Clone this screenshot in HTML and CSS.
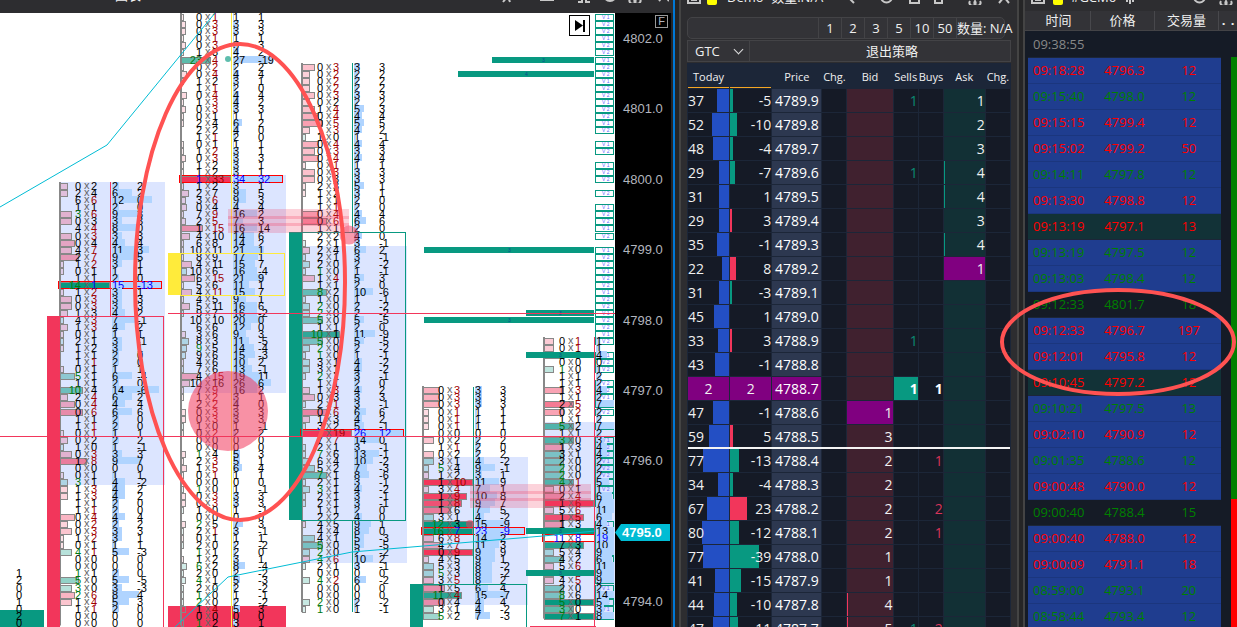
FILE: index.html
```
<!doctype html>
<html lang="zh-CN">
<head>
<meta charset="utf-8">
<title>图表</title>
<link rel="stylesheet" href="styles.css">
</head>

<body>
<div class="wrap">
	<div class="chart">
		<div class="bar chart-bar">
			<span class="name">图表</span>
			<svg class="icons" width="170" height="14" viewBox="0 0 170 14"><path d="M4 13l4-5M9 8l2 5M8 7V3M42 2h12v9H42zM79 13h4v-3M91 13h-4v-3M79 4V1h12v3M105 6a6 6 0 1 0 12 0a6 6 0 1 0-12 0M109 6h4M131 10a3 3 0 1 0 5 0a3 3 0 1 0 5 0M160 12l5-6l5 6"/></svg>
		</div>
		<div class="chart-main">
			<svg class="plot" id="plot"></svg>
			<button class="skip" aria-label="最新"><svg width="21" height="21" viewBox="0 0 21 21"><path d="M6 5l8 5.500l-8 5.500z"/><path d="M14 5h2v12h-2z"/></svg></button>
			<div class="axis">
				<button class="fix">F</button>
				<div class="prices" id="prices"></div>
				<div class="last">4795.0</div>
			</div>
		</div>
	</div>

	<div class="dom">
		<div class="bar dom-bar">
			<svg class="icons" width="14" height="14" viewBox="0 0 14 14"><path d="M1 5h12v7H1zM4 9h6"/></svg>
			<i class="flag"></i>
			<span class="name">Demo -数量:N/A</span>
			<svg class="icons push" width="170" height="14" viewBox="0 0 170 14"><path d="M2 4a4 4 0 1 0 8 0a4 4 0 1 0-8 0M9 8l4 4M40 6a5.500 5.500 0 1 0 11 0a5.500 5.500 0 1 0-11 0M69 2h9v10h-9zM94 2h7v10h-7zM96 8h4M129 10a3 3 0 1 0 5 0a3 3 0 1 0 5 0M158 12l5-6l5 6"/></svg>
		</div>
		<div class="qty">
			<input type="text" aria-label="数量">
			<button>1</button><button>2</button><button>3</button><button>5</button><button>10</button><button>50</button>
			<span>数量: N/A</span>
		</div>
		<div class="order">
			<select aria-label="有效期"><option>GTC</option></select>
			<button>退出策略</button>
		</div>
		<table class="ladder">
			<colgroup><col class="c42"><col class="c42"><col class="c50"><col class="c25"><col class="c46"><col class="c25"><col class="c25"><col class="c42"><col class="c25"></colgroup>
			<thead>
				<tr><th class="today">Today</th><th class="today"></th><th>Price</th><th>Chg.</th><th>Bid</th><th>Sells</th><th>Buys</th><th>Ask</th><th>Chg.</th></tr>
			</thead>
			<tbody id="ladder"></tbody>
		</table>
	</div>

	<div class="tape">
		<div class="bar tape-bar">
			<svg class="icons" width="14" height="14" viewBox="0 0 14 14"><path d="M1 5h12v7H1zM4 9h6"/></svg>
			<i class="flag"></i>
			<span class="name">#GCM6</span>
			<svg class="icons" width="12" height="14" viewBox="0 0 12 14"><path d="M1 8h10M3 4v7M6 3v10M9 4v7"/></svg>
			<svg class="icons push" width="40" height="14" viewBox="0 0 40 14"><path d="M1 6a5.500 5.500 0 1 0 11 0a5.500 5.500 0 1 0-11 0M28 10a3 3 0 1 0 5 0a3 3 0 1 0 5 0"/></svg>
		</div>
		<div class="tape-head"><span>时间</span><span>价格</span><span>交易量</span><b>.</b><b>.</b></div>
		<div class="tape-body">
			<table class="trades">
				<tbody id="trades"></tbody>
			</table>
			<div class="side"><i class="up"></i><i class="down"></i></div>
		</div>
		<svg class="ring" viewBox="0 0 238 110"><ellipse cx="119" cy="55" rx="116" ry="52"/></svg>
	</div>
</div>

<script>
var NS = 'http://www.w3.org/2000/svg';
var plot = document.getElementById('plot');
var RED = '#f2365b', GREEN = '#089981', YELLOW = '#ffeb3b', BLUE = '#b0d4ff', AREA = '#dce5ff';
var BAR = 13;//标题栏高度

function el(tag, attrs, text){
	var e = document.createElementNS(NS, tag);
	for (var k in attrs) e.setAttribute(k, attrs[k]);
	if (text !== undefined) e.textContent = text;
	plot.appendChild(e);
	return e;
}
function rect(x, y, w, h, fill, stroke, op){
	return el('rect', {x:x, y:y-BAR, width:w, height:h, fill:fill, stroke:stroke || 'none', 'fill-opacity':op === undefined ? 1 : op});
}
function line(x1, y1, x2, y2, color){
	return el('path', {d:'M'+x1+' '+(y1-BAR)+'L'+x2+' '+(y2-BAR), stroke:color, 'class':'ln'});
}
function text(x, y, s, cls){
	return el('text', {x:x, y:y-BAR, 'class':cls}, s);
}
//第k行的中心，0 = 4802.0
function rowY(k){
	return Math.round(38.4 + k*7.04);
}

//每一行: 卖x买，g = 绿色，r = 红色
var cols = [
	{x:60, k:21, max:13, vmax:15, poc:35, area:[182,485], rows:'0x2 2x4 6x6r 1x1 3gx6r 0x3 4x4r 0x3r 0x4 4x7r 2x7r 1x2r 0x1 1x1 14gx1 1x2r 0x3r 0x3r 1x3 4x3r 1x3r 0x1 2x1 1x2 1x1 1x1r 0x1 5gx1 1x1 10gx4 2x4r 0x4r 0x6r 1x1 1x1r 0x1r 0x2 1x0 0x3r 1x8r 0x0 0x1 3gx1 1x3r 1x3r 1x1 1x1r 0x4r 0x2r 0x3r 1x2r 0x1 4gx1r 0x0 0x0 1gx1 5gx0 3gx0 2gx6r 1x4r 1x1r 0x0 0x0'},
	{x:181, k:-3, max:32, vmax:34, poc:20, area:[175,393], rows:'0x1r 0x3r 0x3r 0x1r 0x3r 1x3 23gx4r 0x2r 0x4r 1x2 1x1r 0x4r 1x3r 0x3r 0x1 2x4 2x2 1x1r 0x1 1x2r 0x3r 1x2 1x2 1x33r 1x2 2x7 3x6r 0x4 7x9r 2x5r 1x15r 4x10 6x8 10x11 8x9 4x11 10x6 6x15r 5x6 4x11r 4x5 5x11 9x7 10x10 6x6 3x6 8x3 9gx5 9x6 4x6 7x6 4x15r 10x16 7x9r 1x2r 2x2r 0x3r 0x3r 1x0 0x2r 0x0 0x0 1gx4 2x3r 1x5r 0x1r 0x0 1gx0 0x3r 0x3r 1x0 0x0 2gx5 2x1r 0x1 2x0 1gx1 1x2 6gx2 2x0 4gx1 2x0 1gx0 2gx0 1x4r 0x0 1gx2'},
	{x:302, k:4, max:12, vmax:26, poc:56, area:[246,563], rows:'0x3r 0x2r 0x2r 0x2r 0x3r 0x2 1x4r 0x4r 0x5r 1x3r 1x0 0x4r 0x3r 0x4r 0x1r 0x3r 0x3 2x3 1x2 1x1 1x1r 0x4r 0x6r 1x1 2x2 2x1 2x4 2x1 2x0 1gx0 1x4r 1x1 8gx2 1x0 2gx0 2gx0 5gx0 1x1 10gx1 5gx0 2gx0 1gx0 3x1 3x1 2gx1 1x1 1x3r 0x3 2x1r 0x6r 1x3 3x2 7x19r 7x7r 2x1 7gx6 6x4 5x2 7gx1 2x1 3gx1 2x1 2x1 1x1 2x2 4x5 4x4 4x1 5gx0 2gx0 4gx6r 2x1 0x0 4gx2r 0x0 0x0 2gx0 1gx0'},
	{x:423, k:50, max:9, vmax:23, poc:70, area:[457,605], rows:'0x3r 0x3r 0x3r 0x1r 0x1r 0x1r 0x0 0x2 1x1r 0x2 3x1 5gx4 1x2 1x10r 3x4r 1x9r 1x8r 1x6 3x1 12gx3 16gx7 6x8r 4x7r 0x9r 4x5 5x3 5gx3 3x5r 1x5 11gx4r 0x4 3x1 5gx2'},
	{x:544, k:43, max:5, vmax:19, poc:71, area:[422,605], rows:'0x1r 0x1r 1x3 0x0 1gx0 1x1 1x1 1x3r 1x1 2x5r 0x2r 1x1 5gx2 1x1 3gx0 1x3 3x1 2x0 2gx0 2gx0 4gx1r 0x1 2x4r 1x6r 5x6r 1x5r 1x3 8x5 11x8 7x3 5x4 4x2 5x6r 5x4 4x5r 2x0 8gx6 5gx0 3gx0 7gx1'}
];

//背景
cols.forEach(function(c){
	rect(c.x, c.area[0], c.x == 544 ? 71 : 105, c.area[1]-c.area[0], AREA);
});
rect(47, 316, 12, 320, RED);
rect(0, 610, 44, 30, GREEN);
rect(168, 606, 118, 30, RED);
rect(168, 253, 12, 42, YELLOW);
rect(289, 232, 12, 288, GREEN);
rect(410, 584, 12, 50, GREEN);
rect(530, 626, 66, 5, RED);

//右侧成交量小框
var boxes = [];
for (var k=-3;k<83;k++){
	if ([14,17,21,23,29,44,48,54,56,67,68].indexOf(k) < 0) boxes.push(k);
}
boxes.forEach(function(k){
	rect(595.5, rowY(k)-2.5, 18, 6, k > 55 ? AREA : '#fff', GREEN);
	text(602, rowY(k)+2, 'V ' + (1 + (k*k+3)%3), 'tiny');
});

cols.forEach(function(c){
	c.rows.split(' ').forEach(function(s, i){
		var m = s.match(/^(\d+)(g?)x(\d+)(r?)$/);
		var bid = +m[1], ask = +m[3], d = ask-bid, vol = ask+bid;
		var y = rowY(c.k+i), poc = c.k+i == c.poc;
		var w = Math.min(50, Math.round(50*Math.abs(d)/c.max));
		var a = Math.min(1, Math.abs(d)/c.max + 0.06);
		if (d) rect(c.x+.5, y-2.5, Math.max(2, w-1), 6, d > 0 ? RED : GREEN, '#888', a);
		rect(c.x+52, y-4, Math.min(c.x == 544 ? 18 : 50, Math.round(50*vol/c.vmax)), 7, BLUE);
		if (poc) rect(c.x-1.5, y-3.5, c.x == 544 ? 52 : 103, 7, c.x == 544 ? '#fff' : 'none', '#f00');
		text(c.x+21, y+4, bid, 'n end ' + (m[2] ? 'g' : poc ? 'b' : ''));
		text(c.x+24, y+3, 'x', 'n x');
		text(c.x+31, y+4, ask, 'n ' + (m[4] ? 'r' : poc ? 'b' : ''));
		text(c.x+52, y+4, vol, 'n ' + (poc ? 'b' : ''));
		if (c.x != 544) text(c.x+77, y+4, d, 'n ' + (poc ? 'b' : ''));
	});
	rect(c.x-1, rowY(c.k)-4, 2, c.rows.split(' ').length*7.04, '#888');
});
'12001020'.split('').forEach(function(n, i){
	text(16, rowY(76+i)+4, n, 'n');
});

//K线边框和中线
rect(59.5, 316.5, 104, 320, 'none', RED);
rect(180.5, 253.5, 104, 42, 'none', YELLOW);
rect(301.5, 232.5, 104, 288, 'none', GREEN);
rect(422.5, 584.5, 104, 60, 'none', GREEN);
line(110.5, 182, 110.5, 316, RED);
line(231.5, 13, 231.5, 253, YELLOW);
line(231.5, 295, 231.5, 627, YELLOW);
line(352.5, 63, 352.5, 232, GREEN);
line(352.5, 521, 352.5, 612, GREEN);
line(473.5, 387, 473.5, 584, GREEN);
line(594.5, 337, 594.5, 627, RED);

//成交量横条
[[3,492],[5,458],[30,424],[39,526],[40,424],[45,526],[70,526],[76,526]].forEach(function(b){
	rect(b[1], rowY(b[0])-3, 594-b[1], 6, GREEN);
	text((b[1]+594)/2-1, rowY(b[0])+2, b[0] == 5 ? 4 : 3, 'tiny dark');
});

//堆积区域
[[228,209],[470,484]].forEach(function(p){
	rect(p[0], p[1], 121, 24, RED, '', .22);
	rect(p[0], p[1]+7, 121, 3, RED, '', .25);
	rect(p[0], p[1]+14, 121, 3, RED, '', .25);
});
[[228,411,40,RED,.55],[349,235,9.5,RED,.5],[470,524,4,RED,.55],[228,59,3,GREEN,.65]].forEach(function(p){
	el('circle', {cx:p[0], cy:p[1]-BAR, r:p[2], fill:p[3], opacity:p[4]});
});

line(168, 313.5, 615, 313.5, RED);
line(0, 436.5, 615, 436.5, RED);
line(0, 207, 107, 145, '#00bcd4');
line(107, 145, 215, 13, '#00bcd4');
el('path', {d:'M175 614L228 564L352 539L543 523L595 518', stroke:'#00bcd4', 'class':'ln'});
el('ellipse', {cx:240, cy:282-BAR, rx:105, ry:238, 'class':'mark'});

//价格刻度
var html = '';
for (var p=4802;p>4793;p--) html += '<span>'+p+'.0</span>';
document.getElementById('prices').innerHTML = html;

//盘口: 总量, 差, 价格, bid, sells, buys, ask
var book = [
	[37,-5,'4789.9','','1','','1'],[52,-10,'4789.8','','','','2'],[48,-4,'4789.7','','','','3'],
	[29,-7,'4789.6','','1','','4'],[31,1,'4789.5','','','','4'],[29,3,'4789.4','','','','3'],
	[35,-1,'4789.3','','','','4'],[22,8,'4789.2','','','','1'],[31,-3,'4789.1','','','',''],
	[45,1,'4789.0','','','',''],[33,3,'4788.9','','1','',''],[43,-1,'4788.8','','','',''],
	[2,2,'4788.7','','1','1',''],[47,-1,'4788.6','1','','',''],[59,5,'4788.5','3','','',''],
	[77,-13,'4788.4','2','','1',''],[34,-4,'4788.3','2','','',''],[67,23,'4788.2','2','','2',''],
	[80,-12,'4788.1','2','','1',''],[77,-39,'4788.0','1','','',''],[41,-15,'4787.9','1','','',''],
	[44,-10,'4787.8','4','','',''],[47,-11,'4787.7','5','1','2','']
];
html = '';
book.forEach(function(r){
	var now = r[2] == '4788.7';
	html += '<tr class="' + (now ? 'now' : r[2] == '4788.4' ? 'mid' : '') + '">'
		+ '<td class="tot" style="--w:' + Math.round(r[0]/3) + 'px">' + r[0] + '</td>'
		+ '<td class="dif ' + (r[1] > 0 ? 'pos' : '') + '" style="--w:' + Math.floor(Math.abs(r[1])*.75) + 'px">' + r[1] + '</td>'
		+ '<td class="price">' + r[2] + '</td><td></td>'
		+ '<td class="bid ' + (r[2] == '4788.6' ? 'hot' : r[3] > 3 ? 'edge' : '') + '">' + r[3] + '</td>'
		+ '<td class="sells">' + r[4] + '</td><td class="buys">' + r[5] + '</td>'
		+ '<td class="ask ' + (r[2] == '4789.2' ? 'hot' : r[6] > 3 ? 'edge' : '') + '">' + r[6] + '</td><td></td></tr>';
});
document.getElementById('ladder').innerHTML = html;

//成交明细
var trades = [
	'09:38:55   first','09:18:28 4796.3 12 r','09:15:40 4798.0 12 g','09:15:15 4799.4 12 r','09:15:02 4799.2 50 r',
	'09:14:11 4797.8 12 g','09:13:30 4798.8 12 r','09:13:19 4797.1 13 r teal','09:13:19 4797.5 12 g','09:13:03 4798.4 12 g',
	'09:12:33 4801.7 18 g plain','09:12:33 4796.7 197 r','09:12:01 4795.8 12 r','09:10:45 4797.2 12 r teal','09:10:21 4797.5 13 g',
	'09:02:10 4790.9 12 r','09:01:35 4788.6 12 g','09:00:48 4790.0 12 r','09:00:40 4788.4 15 g plain','09:00:40 4788.0 12 r',
	'09:00:09 4791.1 18 r','08:59:00 4793.1 20 g','08:58:44 4793.4 12 g'
];
html = '';
trades.forEach(function(s){
	var t = s.split(' ');
	html += '<tr class="' + t.slice(3).join(' ') + '"><td>' + t[0] + '</td><td>' + t[1] + '</td><td>' + t[2] + '</td></tr>';
});
document.getElementById('trades').innerHTML = html;
</script>
</body>
</html>
```
FILE: styles.css
```
*{
	box-sizing:border-box;
	}
body{
	margin:0;
	background:#252526;
	color:#f0f0f0;
	font-family:"Open Sans","Noto Sans CJK SC",sans-serif;
	font-size:14px;
	overflow:hidden;
	}
button,input,select{
	font:inherit;
	color:inherit;
	background:none;
	border:0;
	padding:0;
	margin:0;
	min-width:0;
	}
.wrap{
	display:flex;
	height:100vh;
	overflow:hidden;
	}
.bar{
	display:flex;
	align-items:flex-end;
	height:13px;
	flex:none;
	padding-bottom:8px;
	background:#2d2d30;
	line-height:16px;
	white-space:nowrap;
	}
.bar .name{
	font-size:13px;
	}
.icons{
	flex:none;
	fill:none;
	stroke:#c8c8c8;
	stroke-width:2;
	}
.push{
	margin-left:auto;
	}
.flag{
	width:10px;
	height:12px;
	background:#ff0;
	border-radius:2px;
	}

/* 图表 */
.chart{
	flex:1;
	min-width:0;
	display:flex;
	flex-direction:column;
	border-right:2px solid #0078d4;
	}
.chart-bar{
	padding-left:115px;
	padding-right:4px;
	justify-content:space-between;
	padding-bottom:10px;
	}
.chart-main{
	flex:1;
	display:flex;
	position:relative;
	min-height:0;
	padding-right:2px;
	}
.plot{
	flex:1;
	min-width:0;
	height:100%;
	background:#fff;
	}
.plot text{
	font-family:"Liberation Sans",sans-serif;
	}
.n{
	font-size:11px;
	fill:#000;
	}
.end{
	text-anchor:end;
	}
.x{
	fill:#666;
	}
.g{
	fill:#007a10;
	}
.r{
	fill:#a00000;
	}
.b{
	fill:#00f;
	}
.tiny{
	font-size:5px;
	fill:#6a6aff;
	}
.dark{
	fill:#0a4a90;
	}
.ln{
	fill:none;
	stroke-width:1;
	}
.mark,.ring ellipse{
	fill:none;
	stroke:#ff5252;
	stroke-width:4;
	}
.skip{
	position:absolute;
	top:2px;
	right:83px;
	width:21px;
	height:21px;
	background:#fff;
	border:1px solid #000;
	}
.skip svg{
	display:block;
	margin:-1px;
	}
.axis{
	width:56px;
	background:#000;
	position:relative;
	overflow:hidden;
	color:#b2b5be;
	font-family:"Liberation Sans",sans-serif;
	font-size:13px;
	}
.fix{
	position:absolute;
	top:2px;
	right:3px;
	width:13px;
	height:13px;
	border:1px solid #999;
	font-size:11px;
	line-height:11px;
	}
.prices span{
	display:block;
	height:10%;
	padding-left:8px;
	}
.prices{
	height:704px;
	padding-top:18px;
	box-sizing:content-box;
	}
.last{
	position:absolute;
	top:511px;
	left:0;
	right:1px;
	height:17px;
	line-height:17px;
	padding-left:7px;
	background:#00bcd4;
	color:#fff;
	font-weight:bold;
	clip-path:polygon(0 50%,6px 0,100% 0,100% 100%,6px 100%);
	}

/* 盘口 */
.dom{
	flex:0 0 340px;
	min-width:0;
	margin-left:4px;
	padding:0 6px;
	border:solid #444;
	border-width:0 2px;
	background:#2d2d30;
	}
.dom-bar{
	gap:10px;
	}
.dom-bar .flag{
	margin-left:-4px;
	}
.qty,.order{
	display:flex;
	height:22px;
	margin-top:4px;
	background:#333337;
	border:1px solid #434346;
	line-height:20px;
	font-size:13px;
	}
.qty{
	border-radius:5px;
	margin-right:6px;
	}
.qty input{
	flex:1;
	}
.qty button{
	width:23px;
	border-left:1px solid #434346;
	}
.qty span{
	width:48px;
	border-left:1px solid #434346;
	white-space:nowrap;
	}
.order{
	position:relative;
	margin-top:1px;
	}
.order select{
	width:62px;
	padding-left:7px;
	appearance:none;
	border-right:1px solid #434346;
	}
.order::after{
	content:"";
	position:absolute;
	left:47px;
	top:5px;
	width:6px;
	height:6px;
	border:solid #ddd;
	border-width:0 1px 1px 0;
	transform:rotate(45deg);
	}
.order button{
	flex:1;
	padding-left:24px;
	}
.ladder{
	width:100%;
	margin-top:1px;
	table-layout:fixed;
	border-collapse:separate;
	border-spacing:1px;
	background:#1c2638;
	}
.c42{width:41px;}
.c50{width:49px;}
.c25{width:24px;}
.c46{width:45px;}
.ladder th{
	height:24px;
	padding:0;
	font-size:11px;
	font-weight:normal;
	text-align:center;
	white-space:nowrap;
	}
.ladder th.today{
	box-shadow:inset 0 -1px #f5a623;
	}
.ladder td{
	height:23px;
	line-height:23px;
	padding:0;
	background-color:#151a26;
	text-align:right;
	}
.ladder .tot{
	text-align:left;
	background-image:linear-gradient(#234fc4,#234fc4);
	background-position:right;
	background-size:var(--w) 100%;
	background-repeat:no-repeat;
	}
.ladder .dif{
	background-image:linear-gradient(#089981,#089981);
	background-size:var(--w) 100%;
	background-repeat:no-repeat;
	}
.ladder .pos{
	background-image:linear-gradient(#f2365b,#f2365b);
	}
.ladder .price{
	background:#2d3850;
	text-align:center;
	color:#fff;
	}
.ladder .bid{
	background:#40212f;
	}
.ladder .ask{
	background:#123035;
	}
.ladder .bid.edge{
	box-shadow:inset 1px 0 #f2365b;
	}
.ladder .ask.edge{
	box-shadow:inset 1px 0 #089981;
	}
.ladder .sells{
	color:#0b8a75;
	}
.ladder .buys{
	color:#d8345a;
	}
.ladder .now .tot,.ladder .now .dif,.ladder .now .price,.ladder .hot{
	background:#800080;
	}
.ladder .now .tot,.ladder .now .dif{
	text-align:center;
	}
.ladder .now .sells{
	background:#089981;
	}
.ladder .now .sells,.ladder .now .buys{
	color:#fff;
	font-weight:bold;
	}
.ladder .mid{
	box-shadow:0 -2px #f4f4f4;
	}

/* 成交明细 */
.tape{
	flex:0 0 214px;
	margin-left:4px;
	position:relative;
	border-left:2px solid #444;
	background:#151b26;
	}
.tape-bar{
	gap:8px;
	padding-left:6px;
	padding-right:4px;
	}
.tape-head{
	display:flex;
	height:20px;
	margin-top:-2px;
	padding-left:2px;
	position:relative;
	background:#333337;
	border-bottom:1px solid #434346;
	line-height:19px;
	font-size:13px;
	}
.tape-head span{
	flex:1;
	text-align:center;
	border-right:1px solid #48484c;
	}
.tape-head b{
	width:9px;
	text-align:center;
	}
.tape-body{
	display:flex;
	padding-left:3px;
	}
.trades{
	flex:1;
	width:100%;
	border-collapse:collapse;
	table-layout:fixed;
	font-size:13px;
	background:#1f3d8f;
	}
.trades td{
	height:26px;
	padding:0;
	text-align:center;
	border-bottom:1px solid #1b367e;
	}
.trades td:first-child{
	padding-left:5px;
	text-align:left;
	}
.trades .r td{
	color:#f00;
	}
.trades .g td{
	color:#008000;
	}
.trades .teal{
	background:#123237;
	}
.trades .plain,.trades .first{
	background:#151b26;
	}
.trades .first td{
	color:#888;
	}
.trades .teal td,.trades .plain td,.trades .first td{
	border-color:#1c2638;
	}
.side{
	width:6px;
	margin-left:10px;
	padding-top:26px;
	display:flex;
	flex-direction:column;
	}
.side i{
	flex:130;
	background:#f00;
	}
.side .up{
	flex:442;
	background:#008000;
	}
.ring{
	position:absolute;
	left:-26px;
	top:287px;
	width:238px;
	height:110px;
	}
```
